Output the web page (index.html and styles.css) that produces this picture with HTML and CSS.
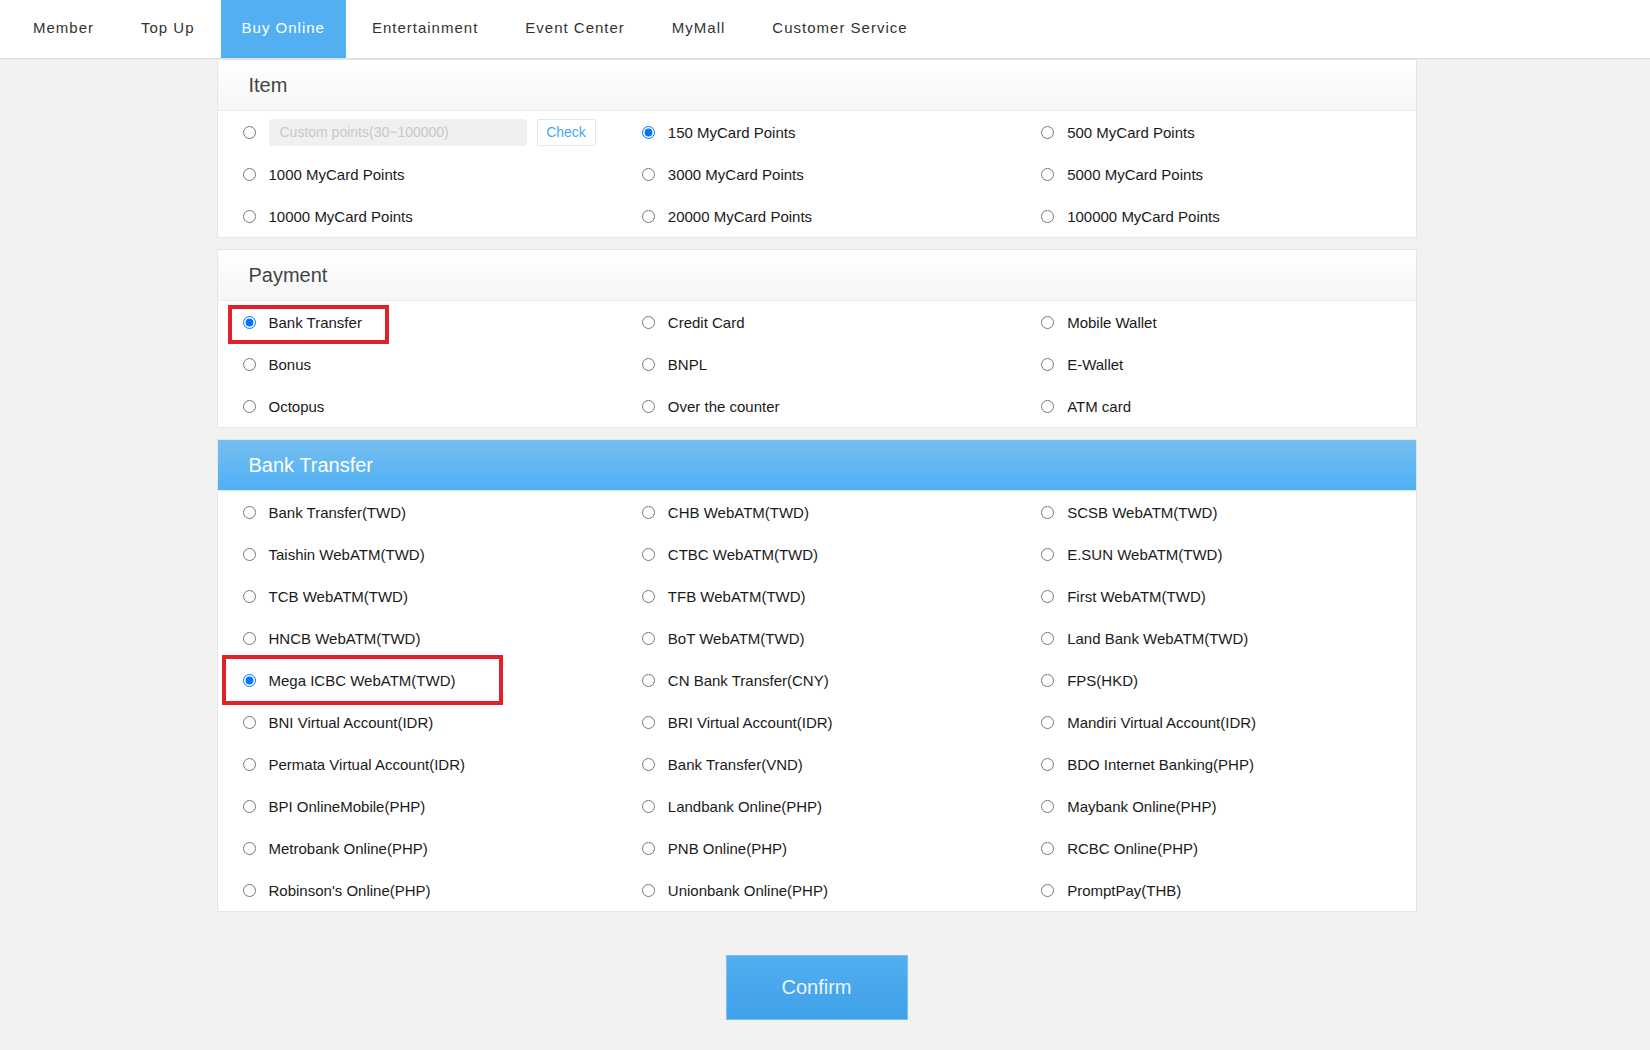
FILE: index.html
```html
<!DOCTYPE html>
<html lang="en">
<head>
    <meta charset="UTF-8">
    <title>MyCard - Buy Online</title>
    <link rel="stylesheet" href="styles.css">
</head>
<body>
<nav class="topnav">
    <ul>
        <li><a href="#">Member</a></li>
        <li><a href="#">Top Up</a></li>
        <li class="active"><a href="#">Buy Online</a></li>
        <li><a href="#">Entertainment</a></li>
        <li><a href="#">Event Center</a></li>
        <li><a href="#">MyMall</a></li>
        <li><a href="#">Customer Service</a></li>
    </ul>
</nav>

<div class="wrap">
<div class="page">

    <!-- Item -->
    <section class="card">
        <h2 class="card-head">Item</h2>
        <div class="options">
            <label class="opt">
                <input type="radio" name="item">
                <span class="custom">
                    <input type="text" class="custom-input" placeholder="Custom points(30~100000)" disabled>
                    <button type="button" class="check-btn">Check</button>
                </span>
            </label>
            <label class="opt"><input type="radio" name="item" checked><span>150 MyCard Points</span></label>
            <label class="opt"><input type="radio" name="item"><span>500 MyCard Points</span></label>
            <label class="opt"><input type="radio" name="item"><span>1000 MyCard Points</span></label>
            <label class="opt"><input type="radio" name="item"><span>3000 MyCard Points</span></label>
            <label class="opt"><input type="radio" name="item"><span>5000 MyCard Points</span></label>
            <label class="opt"><input type="radio" name="item"><span>10000 MyCard Points</span></label>
            <label class="opt"><input type="radio" name="item"><span>20000 MyCard Points</span></label>
            <label class="opt"><input type="radio" name="item"><span>100000 MyCard Points</span></label>
        </div>
    </section>

    <!-- Payment -->
    <section class="card">
        <h2 class="card-head">Payment</h2>
        <div class="options">
            <label class="opt"><input type="radio" name="pay" checked><span>Bank Transfer</span><i class="mark mark-pay"></i></label>
            <label class="opt"><input type="radio" name="pay"><span>Credit Card</span></label>
            <label class="opt"><input type="radio" name="pay"><span>Mobile Wallet</span></label>
            <label class="opt"><input type="radio" name="pay"><span>Bonus</span></label>
            <label class="opt"><input type="radio" name="pay"><span>BNPL</span></label>
            <label class="opt"><input type="radio" name="pay"><span>E-Wallet</span></label>
            <label class="opt"><input type="radio" name="pay"><span>Octopus</span></label>
            <label class="opt"><input type="radio" name="pay"><span>Over the counter</span></label>
            <label class="opt"><input type="radio" name="pay"><span>ATM card</span></label>
        </div>
    </section>

    <!-- Bank Transfer -->
    <section class="card">
        <h2 class="card-head card-head-blue">Bank Transfer</h2>
        <div class="options">
            <label class="opt"><input type="radio" name="bank"><span>Bank Transfer(TWD)</span></label>
            <label class="opt"><input type="radio" name="bank"><span>CHB WebATM(TWD)</span></label>
            <label class="opt"><input type="radio" name="bank"><span>SCSB WebATM(TWD)</span></label>
            <label class="opt"><input type="radio" name="bank"><span>Taishin WebATM(TWD)</span></label>
            <label class="opt"><input type="radio" name="bank"><span>CTBC WebATM(TWD)</span></label>
            <label class="opt"><input type="radio" name="bank"><span>E.SUN WebATM(TWD)</span></label>
            <label class="opt"><input type="radio" name="bank"><span>TCB WebATM(TWD)</span></label>
            <label class="opt"><input type="radio" name="bank"><span>TFB WebATM(TWD)</span></label>
            <label class="opt"><input type="radio" name="bank"><span>First WebATM(TWD)</span></label>
            <label class="opt"><input type="radio" name="bank"><span>HNCB WebATM(TWD)</span></label>
            <label class="opt"><input type="radio" name="bank"><span>BoT WebATM(TWD)</span></label>
            <label class="opt"><input type="radio" name="bank"><span>Land Bank WebATM(TWD)</span></label>
            <label class="opt"><input type="radio" name="bank" checked><span>Mega ICBC WebATM(TWD)</span><i class="mark mark-bank"></i></label>
            <label class="opt"><input type="radio" name="bank"><span>CN Bank Transfer(CNY)</span></label>
            <label class="opt"><input type="radio" name="bank"><span>FPS(HKD)</span></label>
            <label class="opt"><input type="radio" name="bank"><span>BNI Virtual Account(IDR)</span></label>
            <label class="opt"><input type="radio" name="bank"><span>BRI Virtual Account(IDR)</span></label>
            <label class="opt"><input type="radio" name="bank"><span>Mandiri Virtual Account(IDR)</span></label>
            <label class="opt"><input type="radio" name="bank"><span>Permata Virtual Account(IDR)</span></label>
            <label class="opt"><input type="radio" name="bank"><span>Bank Transfer(VND)</span></label>
            <label class="opt"><input type="radio" name="bank"><span>BDO Internet Banking(PHP)</span></label>
            <label class="opt"><input type="radio" name="bank"><span>BPI OnlineMobile(PHP)</span></label>
            <label class="opt"><input type="radio" name="bank"><span>Landbank Online(PHP)</span></label>
            <label class="opt"><input type="radio" name="bank"><span>Maybank Online(PHP)</span></label>
            <label class="opt"><input type="radio" name="bank"><span>Metrobank Online(PHP)</span></label>
            <label class="opt"><input type="radio" name="bank"><span>PNB Online(PHP)</span></label>
            <label class="opt"><input type="radio" name="bank"><span>RCBC Online(PHP)</span></label>
            <label class="opt"><input type="radio" name="bank"><span>Robinson's Online(PHP)</span></label>
            <label class="opt"><input type="radio" name="bank"><span>Unionbank Online(PHP)</span></label>
            <label class="opt"><input type="radio" name="bank"><span>PromptPay(THB)</span></label>
        </div>
    </section>

    <div class="actions">
        <button type="button" class="confirm-btn">Confirm</button>
    </div>

</div>
</div>
</body>
</html>
```

FILE: styles.css
```css
/* Buy Online page */
body {
    margin: 0;
    background: #F2F2F2;
    font-family: "Liberation Sans", Arial, sans-serif;
    color: #1A1A1A;
}

/* top navigation */
.topnav {
    background: #FFFFFF;
    border-bottom: 1px solid #DDDDDD;
}

.topnav ul {
    display: flex;
    gap: 5px;
    margin: 0;
    padding: 0 0 0 12px;
    list-style: none;
}

.topnav li a {
    display: block;
    height: 58px;
    line-height: 55px;
    padding: 0 21px;
    font-size: 15px;
    letter-spacing: 1px;
    color: #333333;
    text-decoration: none;
}

.topnav li.active a {
    background: #52B0F2;
    color: #FFFFFF;
}

/* page body, centred like the original (which had a 17px scrollbar) */
.wrap {
    padding-right: 17px;
}

.page {
    width: 1200px;
    margin: 0 auto;
}

.card {
    background: #FFFFFF;
    border: 1px solid #E6E6E6;
    margin-bottom: 11px;
}

.card-head {
    margin: 0;
    height: 50px;
    line-height: 50px;
    padding-left: 31px;
    font-size: 20px;
    font-weight: 400;
    color: #444444;
    background: linear-gradient(#FFFFFF, #F6F6F6);
    border-bottom: 1px solid #ECECEC;
}

.card-head-blue {
    color: #FFFFFF;
    background: linear-gradient(#75BEEF, #4FB0F5);
    border-bottom-color: #D6E9F8;
}

.options {
    display: grid;
    grid-template-columns: repeat(3, 1fr);
}

.opt {
    position: relative;
    display: flex;
    align-items: center;
    gap: 13px;
    height: 42px;
    padding-left: 25px;
    font-size: 15px;
    cursor: pointer;
}

.opt input[type="radio"] {
    width: 13px;
    height: 13px;
    margin: 0;
    flex: none;
}

/* custom points field */
.custom {
    display: flex;
    align-items: center;
    gap: 10px;
}

.custom-input {
    box-sizing: border-box;
    width: 258px;
    height: 27px;
    padding: 0 11px;
    border: none;
    border-radius: 3px;
    background: #F0F0F0;
    font-family: inherit;
    font-size: 14px;
}

.custom-input::placeholder {
    color: #C8C8C8;
}

.check-btn {
    box-sizing: border-box;
    width: 59px;
    height: 27px;
    background: #FFFFFF;
    border: 1px solid #DCE8F4;
    border-radius: 2px;
    color: #4AA8EF;
    font-family: inherit;
    font-size: 14px;
    cursor: pointer;
}

/* red highlight boxes from the screenshot */
.mark {
    position: absolute;
    box-sizing: border-box;
    border: 4px solid #E3202A;
    pointer-events: none;
}

.mark-pay {
    left: 10px;
    top: 4px;
    width: 161px;
    height: 39px;
}

.mark-bank {
    left: 4px;
    top: -4px;
    width: 281px;
    height: 50px;
}

/* confirm */
.actions {
    display: flex;
    justify-content: center;
    padding-top: 32px;
}

.confirm-btn {
    width: 182px;
    height: 65px;
    background: linear-gradient(#52AEF1, #3FA1E7);
    border: 1px solid #7CC0EF;
    color: #EAF5FE;
    font-family: inherit;
    font-size: 20px;
    cursor: pointer;
}
```
